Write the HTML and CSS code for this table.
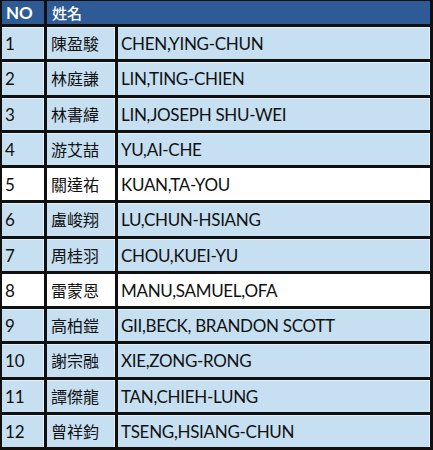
FILE: index.html
```html
<!DOCTYPE html>
<html>
<head>
<meta charset="utf-8">
<link rel="stylesheet" href="styles.css">
</head>
<body>
<div class="roster">
  <div class="cell head no">NO</div>
  <div class="cell head name">姓名</div>

  <div class="cell num">1</div><div class="cell zh">陳盈駿</div><div class="cell en">CHEN,YING-CHUN</div>
  <div class="cell num">2</div><div class="cell zh">林庭謙</div><div class="cell en">LIN,TING-CHIEN</div>
  <div class="cell num">3</div><div class="cell zh">林書緯</div><div class="cell en">LIN,JOSEPH SHU-WEI</div>
  <div class="cell num">4</div><div class="cell zh">游艾喆</div><div class="cell en">YU,AI-CHE</div>
  <div class="cell num white">5</div><div class="cell zh white">關達祐</div><div class="cell en white">KUAN,TA-YOU</div>
  <div class="cell num">6</div><div class="cell zh">盧峻翔</div><div class="cell en">LU,CHUN-HSIANG</div>
  <div class="cell num">7</div><div class="cell zh">周桂羽</div><div class="cell en">CHOU,KUEI-YU</div>
  <div class="cell num white">8</div><div class="cell zh white">雷蒙恩</div><div class="cell en white">MANU,SAMUEL,OFA</div>
  <div class="cell num">9</div><div class="cell zh">高柏鎧</div><div class="cell en">GII,BECK, BRANDON SCOTT</div>
  <div class="cell num">10</div><div class="cell zh">謝宗融</div><div class="cell en">XIE,ZONG-RONG</div>
  <div class="cell num">11</div><div class="cell zh">譚傑龍</div><div class="cell en">TAN,CHIEH-LUNG</div>
  <div class="cell num">12</div><div class="cell zh">曾祥鈞</div><div class="cell en">TSENG,HSIANG-CHUN</div>
</div>
</body>
</html>
```
FILE: styles.css
```css
html, body {
  margin: 0;
  padding: 0;
  background: #ffffff;
}

.roster {
  box-sizing: border-box;
  width: 433px;
  height: 450px;
  padding: 1px 3px 3px 2px;
  background: #101010;
  display: grid;
  grid-template-columns: 42px 68px 1fr;
  grid-template-rows: 23px repeat(12, 1fr);
  gap: 3px;
  font-family: Lato, "Noto Sans CJK TC", sans-serif;
  color: #111111;
}

.cell {
  display: flex;
  align-items: center;
  background: #c6dff1;
  box-shadow: inset -1px 1px 0 rgba(255, 255, 255, 0.55);
  white-space: nowrap;
  overflow: hidden;
}

.cell.white {
  background: #ffffff;
  box-shadow: none;
}

.head {
  background: #2e5a95;
  box-shadow: none;
  color: #ffffff;
}

.head.no {
  padding-left: 4px;
  font-size: 17px;
  font-weight: 700;
}

.head.name {
  grid-column: span 2;
  padding-left: 5px;
  font-family: "Noto Sans CJK TC", sans-serif;
  font-size: 15px;
  font-weight: 500;
}

.num {
  padding-left: 3px;
  font-size: 17px;
  padding-top: 1px;
}

.zh {
  padding-left: 4px;
  font-family: "Noto Sans CJK TC", sans-serif;
  font-size: 16px;
}

.en {
  padding-left: 3px;
  font-size: 17px;
  letter-spacing: -0.3px;
  padding-top: 1px;
}
```
